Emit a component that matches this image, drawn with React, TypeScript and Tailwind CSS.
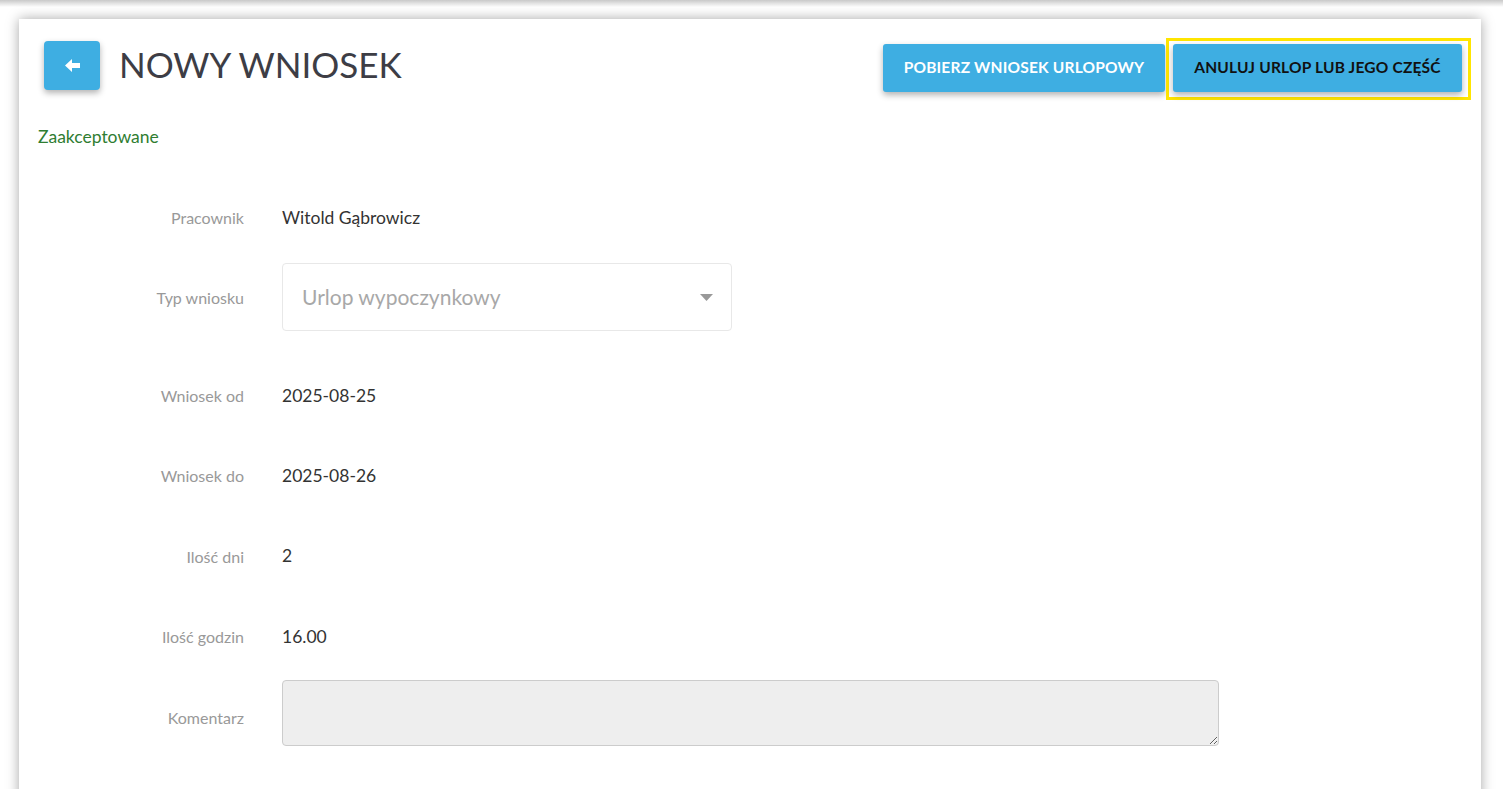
import React from "react";

const rows: { label: string; value: string; h: string }[] = [
  { label: "Wniosek od", value: "2025-08-25", h: "h-[80px]" },
  { label: "Wniosek do", value: "2025-08-26", h: "h-[80px]" },
  { label: "Ilość dni", value: "2", h: "h-[81px]" },
  { label: "Ilość godzin", value: "16.00", h: "h-[80px]" },
];

export default function App() {
  return (
    <div className="w-full h-[789px] overflow-hidden bg-white font-['Lato','Open_Sans',sans-serif] relative">
      <div className="absolute top-0 left-0 w-full h-[7px] bg-gradient-to-b from-[#c9c9c9] to-white"></div>
      <div className="pt-[19px] pl-[19px] w-[1481px]">
        <div className="bg-white h-[800px] shadow-[0_0_12px_rgba(0,0,0,0.35)] relative">
          {/* header */}
          <div className="flex items-start justify-between pl-[25px] pr-[10px] pt-[19px]">
            <div className="flex items-center mt-[3px]">
              <button className="w-[56px] h-[49px] bg-[#3eaee2] rounded-[4px] shadow-[0_3px_6px_rgba(0,0,0,0.3)] flex items-center justify-center">
                <svg width="15" height="13" viewBox="0 0 15 13">
                  <path d="M0 6.5 L7 0 L7 4 L15 4 L15 9 L7 9 L7 13 Z" fill="white" />
                </svg>
              </button>
              <h1 className="ml-[19px] text-[35px] text-[#3d3d45] leading-none pb-[2px]">NOWY WNIOSEK</h1>
            </div>
            <div className="flex items-start">
              <button className="h-[48px] w-[282px] mt-[6px] bg-[#3eaee2] rounded-[3px] shadow-[0_3px_6px_rgba(0,0,0,0.3)] text-white font-bold text-[15.5px] tracking-[0.2px]">
                POBIERZ WNIOSEK URLOPOWY
              </button>
              <div className="ml-[1px] border-[3px] border-[#ffe500] pt-[3px] pl-[4px] pr-[6px] pb-[5px]">
                <button className="h-[48px] w-[289px] bg-[#3eaee2] rounded-[3px] shadow-[0_3px_6px_rgba(0,0,0,0.3)] text-[#111] font-bold text-[15.5px] tracking-[0.2px]">
                  ANULUJ URLOP LUB JEGO CZĘŚĆ
                </button>
              </div>
            </div>
          </div>

          <div className="pl-[19px] mt-[25px] text-[#2f7d32] text-[17.5px] leading-[24px]">Zaakceptowane</div>

          {/* form */}
          <div className="mt-[29px]">
            <div className="flex items-center h-[80px]">
              <div className="w-[225px] text-right text-[#999] text-[16px]">Pracownik</div>
              <div className="ml-[38px] text-[#333] text-[17.5px]">Witold Gąbrowicz</div>
            </div>
            <div className="flex items-center h-[78px] mb-[20px]">
              <div className="w-[225px] text-right text-[#999] text-[16px] pt-[2px]">Typ wniosku</div>
              <div className="ml-[38px] w-[450px] h-[68px] border border-[#e8e8e8] rounded-[4px] flex items-center justify-between pl-[19px] pr-[18px]">
                <span className="text-[#a8a8a8] text-[21px]">Urlop wypoczynkowy</span>
                <svg width="13" height="7" viewBox="0 0 13 7">
                  <path d="M0 0 L13 0 L6.5 7 Z" fill="#999" />
                </svg>
              </div>
            </div>
            {rows.map((r) => (
              <div key={r.label} className={`flex items-center ${r.h}`}>
                <div className="w-[225px] text-right text-[#999] text-[16px]">{r.label}</div>
                <div className="ml-[38px] text-[#333] text-[17.5px]">{r.value}</div>
              </div>
            ))}
            <div className="flex items-start">
              <div className="w-[225px] mt-[29px] leading-[24px] text-right text-[#999] text-[16px]">Komentarz</div>
              <textarea
                readOnly
                className="ml-[38px] mt-[3px] w-[937px] h-[66px] bg-[#eeeeee] border border-[#cccccc] rounded-[4px] resize-y"
              ></textarea>
            </div>
          </div>
        </div>
      </div>
    </div>
  );
}
